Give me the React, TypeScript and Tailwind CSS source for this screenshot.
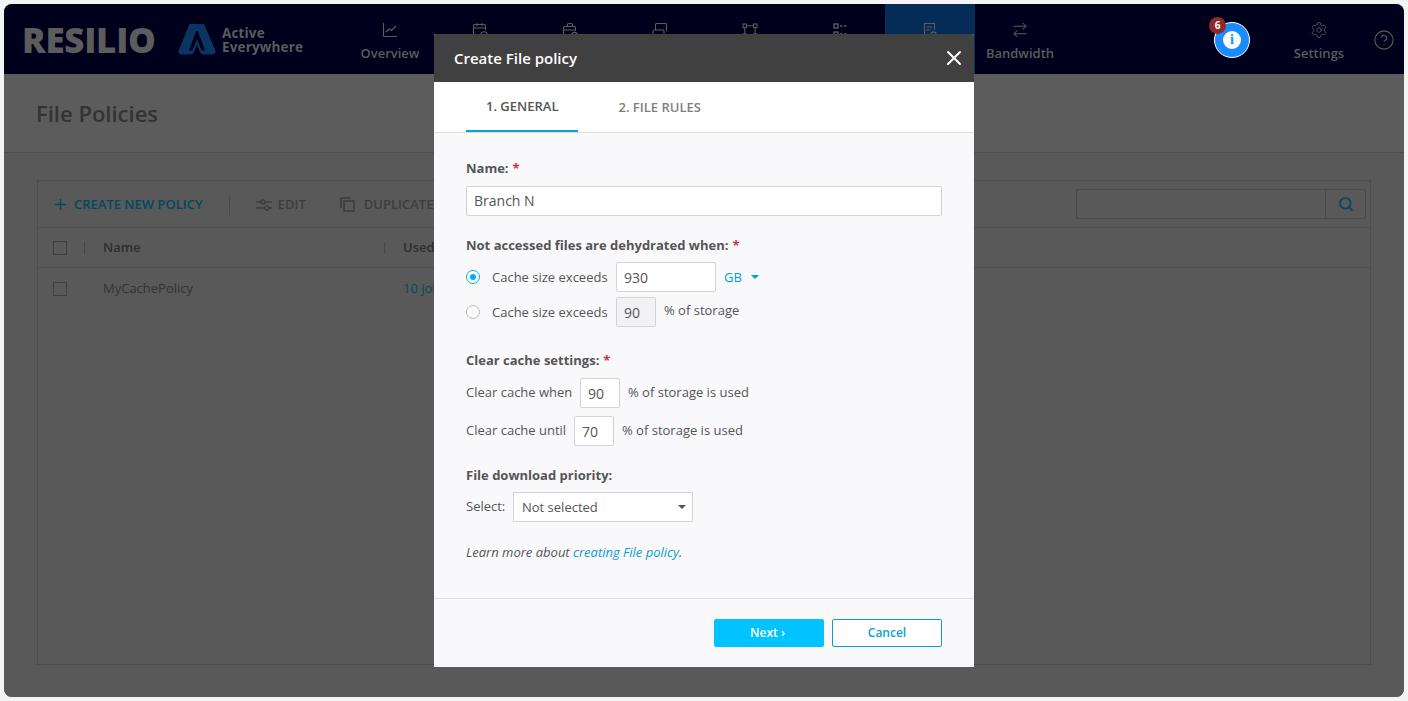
import React from "react";
import { ArrowRightLeft, Settings, CircleHelp, Search, Plus, X } from "lucide-react";

const font = { fontFamily: '"Open Sans", sans-serif' };

function Ico({ children }: { children: React.ReactNode }) {
  return (
    <svg width="18" height="18" viewBox="0 0 18 18" fill="none" stroke="currentColor" strokeWidth="1.1">
      {children}
    </svg>
  );
}

function NavItem({ icon, label, active }: { icon: React.ReactNode; label?: string; active?: boolean }) {
  return (
    <div className={"w-[90px] h-full flex flex-col items-center pt-[17px] " + (active ? "bg-[#052c56]" : "")}>
      <div className="h-[18px] flex items-center justify-center text-[#5c5c5c]">{icon}</div>
      <div className="mt-[4px] text-[13px] leading-[20px] font-semibold text-[#5c5c5c]">{label}</div>
    </div>
  );
}

function Req() {
  return <span className="text-[#c8323c] ml-[4px]">*</span>;
}

function Field({ value, w, disabled }: { value: string; w: string; disabled?: boolean }) {
  return (
    <div className={`${w} h-[30px] border border-[#d4d4d4] rounded-[2px] flex items-center pl-[7px] pt-[1px] text-[14px] text-[#555] ${disabled ? "bg-[#f2f2f4]" : "bg-white"}`}>
      {value}
    </div>
  );
}

function Radio({ on }: { on?: boolean }) {
  return (
    <div className={`w-[14px] h-[14px] rounded-full border bg-white flex items-center justify-center ${on ? "border-[#00aeef]" : "border-[#b5b5b5]"}`}>
      {on && <div className="w-[6px] h-[6px] rounded-full bg-[#00aeef]" />}
    </div>
  );
}

function Box() {
  return <div className="w-[14px] h-[14px] border border-[#3f3f3f]" />;
}

export default function App() {
  return (
    <div style={font} className="relative w-full h-[701px] overflow-hidden bg-[#f4f4f4] pt-[4px] px-[4px] pb-[4px]">
      <div className="h-[693px] rounded-[8px] overflow-hidden bg-[#5b5b5b] flex flex-col">
        {/* nav */}
        <div className="h-[70px] shrink-0 bg-[#00001c] flex items-stretch relative">
          <div className="w-[341px] flex items-center pl-[18px] shrink-0">
            <span className="w-[134px] text-[35px] leading-none font-extrabold tracking-[-0.3px] text-[#5c5c5c]">RESILIO</span>
            <svg width="38" height="31" viewBox="0 0 38 31" className="ml-[22px] shrink-0 mt-[1px]">
              <path d="M11.5 0 H26 L37.2 26 Q38.6 30.5 34 30.5 H25.5 Q23 30.5 22 28 L19 20.5 L16 28 Q15 30.5 12.5 30.5 H4 Q-0.6 30.5 0.8 26 Z" fill="#0a3562" />
              <path d="M18.2 7 L11 26.5 H14.4 L19 15 L23.6 26.5 H27 L19.8 7 Z" fill="#00001c" />
            </svg>
            <div className="ml-[6px] mt-[2px] text-[#5c5c5c] text-[13.5px] leading-[14px] font-bold tracking-[0.15px]">
              <div>Active</div>
              <div>Everywhere</div>
            </div>
          </div>
          <NavItem
            label="Overview"
            icon={
              <Ico>
                <path d="M2.5 2v13.5H16" />
                <path d="M5 11l3-3 2.5 1.5L15 5" />
              </Ico>
            }
          />
          <NavItem
            icon={
              <Ico>
                <path d="M9 15H3.5a1 1 0 0 1-1-1V4.5a1 1 0 0 1 1-1h10a1 1 0 0 1 1 1V9" />
                <path d="M2.5 7h12M6 2v3M11 2v3" />
                <circle cx="13" cy="14" r="3.2" />
              </Ico>
            }
          />
          <NavItem
            icon={
              <Ico>
                <path d="M9 15H3.5a1 1 0 0 1-1-1V6.5a1 1 0 0 1 1-1h10a1 1 0 0 1 1 1V10" />
                <path d="M6.5 5.5V3.5a1 1 0 0 1 1-1h3a1 1 0 0 1 1 1v2M2.5 9h12" />
                <circle cx="13.5" cy="14" r="2.6" />
              </Ico>
            }
          />
          <NavItem
            icon={
              <Ico>
                <path d="M4.5 9V3.5a1 1 0 0 1 1-1h9a1 1 0 0 1 1 1V10" />
                <rect x="2" y="9" width="11" height="6.5" rx="1" />
              </Ico>
            }
          />
          <NavItem
            icon={
              <Ico>
                <rect x="2" y="3" width="3.5" height="3.5" />
                <rect x="12.5" y="3" width="3.5" height="3.5" />
                <rect x="2" y="13" width="3.5" height="3.5" />
                <rect x="12.5" y="13" width="3.5" height="3.5" />
                <path d="M5.5 4.8h7M3.8 6.5V13M14.2 6.5V13" />
              </Ico>
            }
          />
          <NavItem
            icon={
              <Ico>
                <rect x="3" y="3" width="4" height="4" strokeWidth="1.4" />
                <rect x="3" y="11" width="4" height="4" strokeWidth="1.4" />
                <path d="M9 5h2.5M13 5h2.5M9 13h2.5M13 13h2.5" strokeWidth="1.6" />
              </Ico>
            }
          />
          <NavItem
            active
            icon={
              <Ico>
                <path d="M8.5 15.5H3.5v-13h10V9" />
                <path d="M5.5 6h6M5.5 9h4" />
                <circle cx="12.5" cy="13.5" r="2.6" />
              </Ico>
            }
          />
          <NavItem icon={<ArrowRightLeft size={18} strokeWidth={1.4} />} label="Bandwidth" />
          <div className="flex-1" />
          <div className="flex items-start shrink-0 mr-[9px]">
            <div className="relative w-[36px] h-[36px] mt-[18px] rounded-full bg-[#1a8cff] border border-white flex items-center justify-center mr-[44px]">
              <div className="w-[18px] h-[18px] rounded-full bg-white text-[#1a8cff] flex items-center justify-center text-[14px] font-bold leading-none" style={{ fontFamily: '"Liberation Serif", serif' }}>i</div>
              <div className="absolute -top-[6px] -left-[6px] w-[17px] h-[17px] rounded-full bg-[#8c2a2a] text-white text-[10px] font-bold flex items-center justify-center">6</div>
            </div>
            <div className="w-[50px] flex flex-col items-center pt-[17px] mr-[29px]">
              <Settings size={18} strokeWidth={1.2} className="text-[#5c5c5c]" />
              <div className="mt-[4px] text-[13px] leading-[20px] font-semibold text-[#5c5c5c]">Settings</div>
            </div>
            <CircleHelp size={22} strokeWidth={1.2} className="text-[#5c5c5c] mt-[25px]" />
          </div>
        </div>

        {/* title */}
        <div className="h-[79px] shrink-0 border-b border-[#4f4f4f] flex items-center pl-[32px] pt-[1px] bg-[#5c5c5c]">
          <h1 className="text-[22px] font-semibold text-[#333]">File Policies</h1>
        </div>

        {/* panel */}
        <div className="flex-1 px-[33px] pt-[27px] pb-[32px] bg-[#595959]">
          <div className="h-full border border-[#4d4d4d] flex flex-col">
            <div className="h-[47px] shrink-0 border-b border-[#4d4d4d] flex items-center pl-[14px] pr-[4px] pt-[1px] text-[13px] font-semibold">
              <Plus size={17} strokeWidth={2} className="text-[#03485f]" />
              <span className="ml-[5px] text-[#03485f]">CREATE NEW POLICY</span>
              <div className="w-px h-[20px] bg-[#4a4a4a] ml-[26px]" />
              <svg width="16" height="14" viewBox="0 0 16 14" fill="none" stroke="#3d3d3d" strokeWidth="1.4" className="ml-[26px]">
                <path d="M0 4h5M9 4h7M0 10h9M13 10h3" />
                <circle cx="7" cy="4" r="2" />
                <circle cx="11" cy="10" r="2" />
              </svg>
              <span className="ml-[6px] text-[#3d3d3d]">EDIT</span>
              <svg width="15" height="15" viewBox="0 0 15 15" fill="none" stroke="#3d3d3d" strokeWidth="1.6" className="ml-[34px]">
                <path d="M1 11V1h10" />
                <rect x="4" y="4" width="10" height="10" />
              </svg>
              <span className="ml-[9px] text-[#3d3d3d]">DUPLICATE</span>
              <div className="flex-1" />
              <div className="w-[290px] h-[30px] -mt-[2px] border border-[#4a4a4a] rounded-[2px] flex">
                <div className="flex-1" />
                <div className="w-[40px] border-l border-[#4a4a4a] flex items-center justify-center">
                  <Search size={16} strokeWidth={2.6} className="text-[#03485f]" />
                </div>
              </div>
            </div>
            <div className="h-[40px] shrink-0 border-b border-[#4d4d4d] flex items-center pl-[15px] text-[13px] font-semibold text-[#2e2e2e]">
              <Box />
              <div className="w-px h-[12px] bg-[#4a4a4a] ml-[17px]" />
              <span className="ml-[18px] w-[281px]">Name</span>
              <div className="w-px h-[12px] bg-[#4a4a4a]" />
              <span className="ml-[18px]">Used</span>
            </div>
            <div className="h-[40px] shrink-0 flex items-center pl-[15px] pt-[1px] text-[13px] text-[#333]">
              <Box />
              <span className="ml-[36px] w-[300px]">MyCachePolicy</span>
              <span className="text-[#03485f]">10 jobs</span>
            </div>
          </div>
        </div>
      </div>

      {/* modal */}
      <div className="absolute left-[434px] top-[34px] w-[540px] h-[633px] flex flex-col bg-[#f9f9fc] rounded-t-[2px]">
        <div className="h-[48px] shrink-0 bg-[#404040] rounded-t-[2px] flex items-center justify-between pl-[20px] pr-[8px]">
          <span className="text-[15px] font-semibold text-white">Create File policy</span>
          <X size={24} strokeWidth={2} className="text-white" />
        </div>
        <div className="h-[51px] shrink-0 bg-white border-b border-[#dedede] flex pl-[32px] text-[13px] font-semibold">
          <div className="h-[50px] px-[20px] pt-[1px] flex items-center border-b-2 border-[#0aa0d2] text-[#555]">1. GENERAL</div>
          <div className="h-[50px] px-[20px] pt-[1px] ml-[20px] flex items-center text-[#808080]">2. FILE RULES</div>
        </div>

        <div className="flex-1 px-[32px] pt-[26px] text-[13px] text-[#555] leading-[18px]">
          <div className="font-bold">Name:<Req /></div>
          <div className="mt-[9px] w-[476px] h-[30px] bg-white border border-[#d4d4d4] rounded-[2px] flex items-center pl-[7px] text-[14px]">Branch N</div>

          <div className="mt-[20px] font-bold">Not accessed files are dehydrated when:<Req /></div>
          <div className="mt-[8px] flex items-center h-[30px]">
            <Radio on />
            <span className="ml-[12px] w-[124px]">Cache size exceeds</span>
            <Field value="930" w="w-[100px]" />
            <span className="ml-[8px] -mt-[1px] text-[#00a0d6]">GB</span>
            <div className="ml-[9px] w-0 h-0 border-l-[4px] border-r-[4px] border-t-[4px] border-l-transparent border-r-transparent border-t-[#00a0d6]" />
          </div>
          <div className="mt-[5px] flex items-center h-[30px]">
            <Radio />
            <span className="ml-[12px] w-[124px]">Cache size exceeds</span>
            <Field value="90" w="w-[40px]" disabled />
            <span className="ml-[8px] -mt-[4px]">% of storage</span>
          </div>

          <div className="mt-[24px] font-bold">Clear cache settings:<Req /></div>
          <div className="mt-[9px] flex items-center h-[30px]">
            <span className="w-[114px] -mt-[3px]">Clear cache when</span>
            <Field value="90" w="w-[40px]" />
            <span className="ml-[8px] -mt-[3px]">% of storage is used</span>
          </div>
          <div className="mt-[8px] flex items-center h-[30px]">
            <span className="w-[108px] -mt-[3px]">Clear cache until</span>
            <Field value="70" w="w-[40px]" />
            <span className="ml-[8px] -mt-[3px]">% of storage is used</span>
          </div>

          <div className="mt-[20px] font-bold">File download priority:</div>
          <div className="mt-[8px] flex items-center h-[30px]">
            <span className="w-[47px] -mt-[3px]">Select:</span>
            <div className="w-[180px] h-[30px] bg-white border border-[#d4d4d4] flex items-center justify-between pl-[8px] pr-[6px]">
              <span>Not selected</span>
              <div className="w-0 h-0 border-l-[4px] border-r-[4px] border-t-[4px] border-l-transparent border-r-transparent border-t-[#555]" />
            </div>
          </div>

          <div className="mt-[21px] italic text-[13px]">
            Learn more about <span className="text-[#0a9bd0]">creating File policy</span>.
          </div>
        </div>

        <div className="h-[69px] shrink-0 border-t border-[#dedede] flex items-center justent-end justify-end pr-[32px] gap-[8px] text-[12px] font-semibold">
          <div className="w-[110px] h-[28px] rounded-[2px] bg-[#00c3ff] text-white flex items-center justify-center pr-[3px]">Next ›</div>
          <div className="w-[110px] h-[28px] rounded-[2px] border border-[#0a9fd0] text-[#0a9fd0] bg-white flex items-center justify-center">Cancel</div>
        </div>
      </div>
    </div>
  );
}
